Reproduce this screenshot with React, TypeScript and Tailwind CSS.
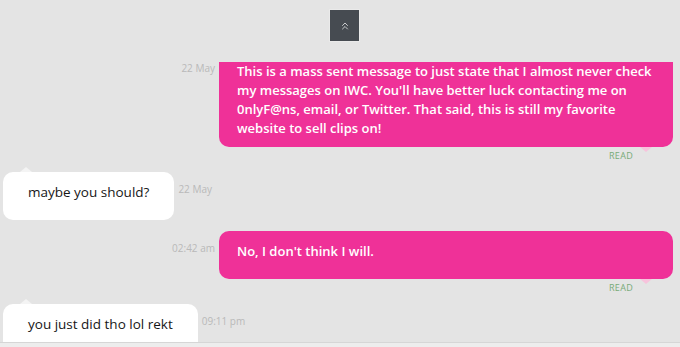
import { ChevronsUp } from "lucide-react";

const font = { fontFamily: '"Open Sans", "Liberation Sans", sans-serif' };

function Sent({ text, time }: { text: string; time: string }) {
  return (
    <div className="flex flex-col items-end pr-[7px]">
      <div className="flex items-start">
        <span className="mr-[4px] mt-[11px] text-[10px] leading-[12px] text-[#b9b9b9]">{time}</span>
        <div className="w-[454px] min-h-[48px] rounded-[10px] bg-[#ef3198] pl-[18px] pr-[16px] pt-[11px] pb-[9px] text-[13px] font-semibold leading-[19px] text-white">
          {text}
        </div>
      </div>
      <div className="flex h-[15px] w-full items-start justify-end pr-[21px]">
        <span className="mt-[3px] text-[9px] leading-[11px] tracking-[0.3px] text-[#78ab78]">READ</span>
        <span className="ml-[7px] h-0 w-0 border-x-[6px] border-t-[5px] border-x-transparent border-t-[#f7c3dc]" />
      </div>
    </div>
  );
}

function Received({ text, time }: { text: string; time: string }) {
  return (
    <div className="flex flex-col items-start pl-[3px]">
      <span className="ml-[17px] h-0 w-0 border-x-[6px] border-b-[5px] border-x-transparent border-b-[#f4f4f4]" />
      <div className="flex items-start">
        <div className="h-[48px] rounded-[10px] bg-white px-[25px] pt-[11px] text-[13.5px] font-medium leading-[19px] text-[#161616]">
          {text}
        </div>
        <span className="ml-[4px] mt-[11px] text-[10px] leading-[12px] text-[#b9b9b9]">{time}</span>
      </div>
    </div>
  );
}

export default function App() {
  return (
    <div className="flex h-[347px] w-[680px] flex-col bg-[#e4e4e4]" style={font}>
      <div className="flex h-[62px] shrink-0 justify-center pl-[9px] pt-[9px]">
        <button className="flex h-[33px] w-[31px] items-center justify-center border border-[#eaeaea] bg-[#464b51] text-[#c9cbcd]">
          <ChevronsUp size={12} strokeWidth={2} />
        </button>
      </div>

      <div className="flex-1 overflow-hidden">
        <div className="-mt-[11px] flex flex-col">
          <Sent
            time="22 May"
            text="This is a mass sent message to just state that I almost never check my messages on IWC. You'll have better luck contacting me on 0nlyF@ns, email, or Twitter. That said, this is still my favorite website to sell clips on!"
          />
          <div className="mt-[5px]">
            <Received time="22 May" text="maybe you should?" />
          </div>
          <div className="mt-[11px]">
            <Sent time="02:42 am" text="No, I don't think I will." />
          </div>
          <div className="mt-[5px]">
            <Received time="09:11 pm" text="you just did tho lol rekt" />
          </div>
        </div>
      </div>

      <div className="h-[5px] shrink-0 border-t border-[#d6d6d6] bg-[#ededed]" />
    </div>
  );
}
